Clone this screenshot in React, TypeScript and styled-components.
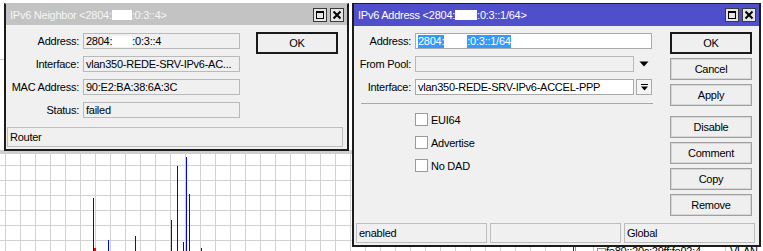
import React from "react";
import styled, { createGlobalStyle, css } from "styled-components";

const Global = createGlobalStyle`
  html, body { margin: 0; padding: 0; background: #ffffff; }
  body {
    font-family: "Liberation Sans", Arial, sans-serif;
    font-size: 11px;
    letter-spacing: -0.25px;
    color: #000;
  }
  #root { width: 763px; height: 251px; overflow: hidden; }
`;

const Desktop = styled.div`
  position: relative;
  width: 763px;
  height: 251px;
  overflow: hidden;
  background: #fff;
`;

const Backdrop = styled.svg`
  position: absolute;
  left: 0;
  top: 0;
  display: block;
  shape-rendering: crispEdges;
`;

const ListPeek = styled.div`
  position: absolute;
  left: 606px;
  top: 246px;
  display: flex;
  line-height: 11px;
  font-size: 11px;
  color: #000;
  white-space: nowrap;
`;

const ListCell = styled.span<{ $w: number }>`
  display: inline-block;
  width: ${(p) => p.$w}px;
`;

const Window = styled.div<{ $x: number; $y: number; $w: number; $h: number; $active?: boolean }>`
  position: absolute;
  left: ${(p) => p.$x}px;
  top: ${(p) => p.$y}px;
  width: ${(p) => p.$w}px;
  height: ${(p) => p.$h}px;
  box-sizing: border-box;
  border: 2px solid #1c1c1c;
  border-top: 1px solid ${(p) => (p.$active ? "#1c1c1c" : "#c3c3c3")};
  background: #f0f0f0;
  display: flex;
  flex-direction: column;
  z-index: 2;
`;

const TitleBar = styled.div<{ $h: number; $active?: boolean }>`
  flex: none;
  height: ${(p) => p.$h}px;
  display: flex;
  align-items: center;
  padding: 0 3px 0 4px;
  background: ${(p) => (p.$active ? "#4f4fcc" : "#c3c3c3")};
  color: ${(p) => (p.$active ? "#ffffff" : "#f6f6f6")};
`;

const TitleText = styled.div`
  flex: 1;
  display: flex;
  align-items: center;
  white-space: nowrap;
`;

const Redact = styled.span<{ $w: number; $h: number }>`
  display: inline-block;
  width: ${(p) => p.$w}px;
  height: ${(p) => p.$h}px;
  background: #ffffff;
`;

const TitleButtons = styled.div`
  display: flex;
  gap: 3px;
`;

const TitleButton = styled.div`
  box-sizing: border-box;
  width: 14px;
  height: 14px;
  border: 1px solid #3a3a3a;
  background: #e6e6e6;
  display: flex;
  align-items: center;
  justify-content: center;
`;

const Body = styled.div`
  flex: 1;
  display: flex;
  flex-direction: column;
`;

const Main = styled.div`
  flex: 1;
  display: flex;
  align-items: flex-start;
`;

const FormColumn = styled.div`
  display: flex;
  flex-direction: column;
`;

const FormGrid = styled.div<{ $label: number; $field: number; $top: number; $left: number }>`
  display: grid;
  grid-template-columns: ${(p) => p.$label}px ${(p) => p.$field}px;
  grid-auto-rows: 16px;
  column-gap: 4px;
  row-gap: 7px;
  padding: ${(p) => p.$top}px 0 0 ${(p) => p.$left}px;
`;

const Label = styled.div`
  text-align: right;
  line-height: 16px;
  white-space: nowrap;
`;

const FieldRow = styled.div`
  display: flex;
  gap: 2px;
  align-items: stretch;
`;

const Field = styled.div<{ $w?: number; $white?: boolean }>`
  box-sizing: border-box;
  height: 16px;
  width: ${(p) => (p.$w ? `${p.$w}px` : "100%")};
  border: 1px solid ${(p) => (p.$white ? "#a9a9a9" : "#b9b9b9")};
  background: ${(p) => (p.$white ? "#ffffff" : "#f0f0f0")};
  padding: 0 0 0 2px;
  line-height: 14px;
  white-space: nowrap;
  overflow: hidden;
  display: flex;
  align-items: center;
`;

const Selected = styled.span`
  display: inline-flex;
  align-items: center;
  height: 13px;
  background: #3399ff;
  color: #fff;
`;

const DropArrow = styled.div`
  width: 16px;
  display: flex;
  align-items: center;
  justify-content: center;
`;

const DropButton = styled.div`
  box-sizing: border-box;
  width: 16px;
  height: 16px;
  border: 1px solid #a9a9a9;
  background: #f4f4f4;
  display: flex;
  align-items: center;
  justify-content: center;
`;

const Separator = styled.div<{ $w: number; $left: number }>`
  width: ${(p) => p.$w}px;
  height: 1px;
  margin: 8px 0 0 ${(p) => p.$left}px;
  background: #a8a8a8;
`;

const CheckList = styled.div<{ $left: number }>`
  display: flex;
  flex-direction: column;
  gap: 10px;
  margin: 9px 0 0 ${(p) => p.$left}px;
`;

const CheckRow = styled.div`
  display: flex;
  align-items: center;
  gap: 3px;
  height: 13px;
`;

const CheckBox = styled.div`
  box-sizing: border-box;
  width: 13px;
  height: 13px;
  border: 1px solid #9a9a9a;
  background: #ffffff;
`;

const ButtonColumn = styled.div<{ $left: number; $top: number }>`
  display: flex;
  flex-direction: column;
  gap: 4px;
  margin: ${(p) => p.$top}px 0 0 ${(p) => p.$left}px;
`;

const Button = styled.button<{ $default?: boolean; $gapBefore?: number }>`
  box-sizing: border-box;
  width: 82px;
  height: 22px;
  margin: ${(p) => p.$gapBefore ?? 0}px 0 0 0;
  padding: 0;
  font: inherit;
  letter-spacing: inherit;
  color: #000;
  background: #efefef;
  border: 1px solid #a0a0a0;
  box-shadow: inset 0 0 0 1px #d6d6d6;
  display: flex;
  align-items: center;
  justify-content: center;
  ${(p) =>
    p.$default &&
    css`
      border: 2px solid #1a1a1a;
      box-shadow: none;
    `}
`;

const StatusRow = styled.div<{ $cols: number; $margin: string }>`
  display: grid;
  grid-template-columns: repeat(${(p) => p.$cols}, 1fr);
  column-gap: 3px;
  margin: ${(p) => p.$margin};
`;

const StatusBox = styled.div`
  box-sizing: border-box;
  height: 20px;
  border: 1px solid #bdbdbd;
  background: #f0f0f0;
  padding-left: 2px;
  line-height: 18px;
  white-space: nowrap;
  overflow: hidden;
`;

const MaxIcon = () => (
  <svg width="10" height="10" viewBox="0 0 10 10">
    <rect x="1.5" y="1.5" width="7" height="7" fill="none" stroke="#000" strokeWidth="1" />
    <rect x="1" y="1" width="8" height="2" fill="#000" />
  </svg>
);

const CloseIcon = () => (
  <svg width="10" height="10" viewBox="0 0 10 10">
    <path d="M1.5 1.5 L8.5 8.5 M8.5 1.5 L1.5 8.5" stroke="#000" strokeWidth="2" fill="none" />
  </svg>
);

const TriangleDown = () => (
  <svg width="10" height="6" viewBox="0 0 10 6">
    <polygon points="0.5,0.5 9.5,0.5 5,5.5" fill="#000" />
  </svg>
);

const DropIcon = () => (
  <svg width="9" height="9" viewBox="0 0 9 9">
    <rect x="1" y="1" width="7" height="1" fill="#000" />
    <polygon points="1,3.5 8,3.5 4.5,7.5" fill="#000" />
  </svg>
);

const TitleControls = () => (
  <TitleButtons>
    <TitleButton>
      <MaxIcon />
    </TitleButton>
    <TitleButton>
      <CloseIcon />
    </TitleButton>
  </TitleButtons>
);

const gridXs = Array.from({ length: 51 }, (_, k) => 5 + 15 * k);
const gridYs = [150, 165, 180, 195, 210, 225, 240];
const bars: [number, number][] = [
  [93, 198],
  [108, 240],
  [135, 236],
  [171, 220],
  [177, 166],
  [183, 242],
  [186, 157],
  [189, 194],
  [201, 248],
];

const Chart = () => (
  <Backdrop width={763} height={251} viewBox="0 0 763 251">
    <rect x="0" y="0" width="763" height="251" fill="#fff" />
    {gridXs.map((x) => (
      <rect key={`v${x}`} x={x} y={150} width={1} height={101} fill="#d2d2d2" />
    ))}
    {gridYs.map((y) => (
      <rect key={`h${y}`} x={0} y={y} width={573} height={1} fill="#d2d2d2" />
    ))}
    <rect x="0" y="59" width="4" height="1" fill="#c8c8c8" />
    <rect x="0" y="151" width="352" height="3" fill="#cfcfcf" />
    {bars.map(([x, y]) => (
      <rect key={`b${x}`} x={x} y={y} width={1} height={251 - y} fill="#0000ff" />
    ))}
    <rect x="94" y="248" width="2" height="3" fill="#ff0000" />
    <rect x="573" y="225" width="190" height="26" fill="#fff" />
    <rect x="573" y="225" width="1" height="26" fill="#303030" />
    <rect x="575" y="225" width="1" height="26" fill="#909090" />
    <rect x="593" y="225" width="1" height="26" fill="#c8c8c8" />
    <rect x="725" y="225" width="1" height="26" fill="#c8c8c8" />
    <rect x="597" y="248" width="8" height="5" fill="#f4f4f4" stroke="#8a8a8a" strokeWidth="1" />
  </Backdrop>
);

export default function App() {
  return (
    <>
      <Global />
      <Desktop>
        <Chart />
        <ListPeek>
          <ListCell $w={124}>fe80::20c:29ff:fe02:4</ListCell>
          <ListCell $w={30}>VLAN</ListCell>
        </ListPeek>

        <Window $x={4} $y={3} $w={345} $h={148}>
          <TitleBar $h={21}>
            <TitleText>
              IPv6 Neighbor &lt;2804:<Redact $w={20} $h={10} />:0:3::4&gt;
            </TitleText>
            <TitleControls />
          </TitleBar>
          <Body>
            <Main>
              <FormGrid $label={73} $field={157} $top={8} $left={0}>
                <Label>Address:</Label>
                <Field>
                  2804:<Redact $w={20} $h={11} />:0:3::4
                </Field>
                <Label>Interface:</Label>
                <Field>vlan350-REDE-SRV-IPv6-AC...</Field>
                <Label>MAC Address:</Label>
                <Field>90:E2:BA:38:6A:3C</Field>
                <Label>Status:</Label>
                <Field>failed</Field>
              </FormGrid>
              <ButtonColumn $left={16} $top={7}>
                <Button $default>OK</Button>
              </ButtonColumn>
            </Main>
            <StatusRow $cols={1} $margin="0 4px 2px 1px">
              <StatusBox>Router</StatusBox>
            </StatusRow>
          </Body>
        </Window>

        <Window $x={352} $y={3} $w={409} $h={244} $active>
          <TitleBar $h={22} $active>
            <TitleText>
              IPv6 Address &lt;2804:<Redact $w={22} $h={10} />:0:3::1/64&gt;
            </TitleText>
            <TitleControls />
          </TitleBar>
          <Body>
            <Main>
              <FormColumn>
                <FormGrid $label={53} $field={237} $top={7} $left={4}>
                  <Label>Address:</Label>
                  <Field $white>
                    <Selected>
                      2804:<Redact $w={23} $h={13} />:0:3::1/64
                    </Selected>
                  </Field>
                  <Label>From Pool:</Label>
                  <FieldRow>
                    <Field $w={219} />
                    <DropArrow>
                      <TriangleDown />
                    </DropArrow>
                  </FieldRow>
                  <Label>Interface:</Label>
                  <FieldRow>
                    <Field $w={219} $white>
                      vlan350-REDE-SRV-IPv6-ACCEL-PPP
                    </Field>
                    <DropButton>
                      <DropIcon />
                    </DropButton>
                  </FieldRow>
                </FormGrid>
                <Separator $w={292} $left={7} />
                <CheckList $left={61}>
                  <CheckRow>
                    <CheckBox />
                    EUI64
                  </CheckRow>
                  <CheckRow>
                    <CheckBox />
                    Advertise
                  </CheckRow>
                  <CheckRow>
                    <CheckBox />
                    No DAD
                  </CheckRow>
                </CheckList>
              </FormColumn>
              <ButtonColumn $left={17} $top={6}>
                <Button $default>OK</Button>
                <Button>Cancel</Button>
                <Button>Apply</Button>
                <Button $gapBefore={6}>Disable</Button>
                <Button>Comment</Button>
                <Button>Copy</Button>
                <Button>Remove</Button>
              </ButtonColumn>
            </Main>
            <StatusRow $cols={3} $margin="0 4px 2px 2px">
              <StatusBox>enabled</StatusBox>
              <StatusBox />
              <StatusBox>Global</StatusBox>
            </StatusRow>
          </Body>
        </Window>
      </Desktop>
    </>
  );
}
